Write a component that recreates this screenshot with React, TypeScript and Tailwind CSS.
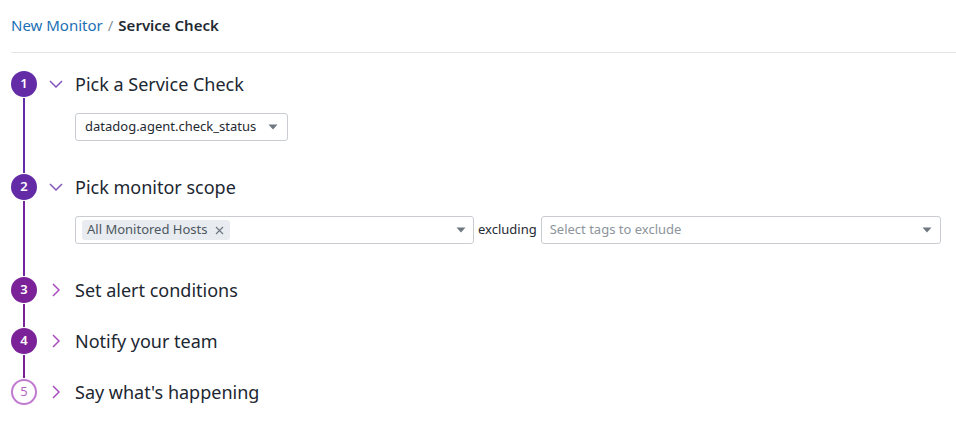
import React from "react";

const font = { fontFamily: '"Noto Sans", "Open Sans", sans-serif' };

function Caret() {
  return (
    <svg width="10" height="6" viewBox="0 0 10 6" className="shrink-0">
      <path d="M0.5 0.5 L9.5 0.5 L5 5.5 Z" fill="#6f7781" />
    </svg>
  );
}

function ChevronDown({ color }: { color: string }) {
  return (
    <svg width="14" height="8" viewBox="0 0 14 8">
      <path d="M1 1 L7 7 L13 1" fill="none" stroke={color} strokeWidth="1.5" />
    </svg>
  );
}

function ChevronRight({ color }: { color: string }) {
  return (
    <svg width="8" height="14" viewBox="0 0 8 14">
      <path d="M1 1 L7 7 L1 13" fill="none" stroke={color} strokeWidth="1.5" />
    </svg>
  );
}

type StepProps = {
  n: number;
  title: string;
  expanded?: boolean;
  circle: "a" | "b" | "c";
  lineColor?: string;
  children?: React.ReactNode;
};

function Step({ n, title, expanded, circle, lineColor, children }: StepProps) {
  const circleCls =
    circle === "a"
      ? "bg-[#632ca6] text-white font-semibold"
      : circle === "b"
      ? "bg-[#7b2299] text-white font-semibold"
      : "border-2 border-[#c27ad1] text-[#b466c4] bg-white font-normal";
  return (
    <div className="flex">
      <div className="flex w-[26px] shrink-0 flex-col items-center">
        <div
          className={`flex h-[26px] w-[26px] items-center justify-center rounded-full text-[13px] ${circleCls}`}
        >
          {n}
        </div>
        {lineColor ? (
          <div className="my-[1px] w-[2px] flex-1" style={{ backgroundColor: lineColor }} />
        ) : null}
      </div>
      <div className="flex-1">
        <div className="flex h-[26px] items-center">
          <div className="ml-[12px] flex w-[14px] justify-center">
            {expanded ? <ChevronDown color="#8557bd" /> : <ChevronRight color="#a84bbd" />}
          </div>
          <div className="ml-[12px] text-[18px] text-[#1c2731]">{title}</div>
        </div>
        {expanded ? (
          <div className="ml-[38px] pb-[33px] pt-[16px]">{children}</div>
        ) : lineColor ? (
          <div className="h-[25px]" />
        ) : null}
      </div>
    </div>
  );
}

export default function App() {
  return (
    <div className="h-[432px] w-[956px] bg-white" style={font}>
      <div className="pl-[11px]">
        <div className="flex h-[53px] items-center border-b border-[#e3e5e8] pb-[1px] text-[15px]">
          <span className="text-[#1a6fb5]">New Monitor</span>
          <span className="mx-[5px] text-[#8a9299]">/</span>
          <span className="font-semibold text-[#1f2a33]">Service Check</span>
        </div>
        <div className="pt-[18px]">
          <Step n={1} title="Pick a Service Check" expanded circle="a" lineColor="#632ca6">
            <div className="flex h-[28px] w-[213px] items-center justify-between rounded-[3px] border border-[#c9cdd2] pl-[9px] pr-[9px] text-[13px] text-[#1f2a33]">
              <span>datadog.agent.check_status</span>
              <Caret />
            </div>
          </Step>
          <Step n={2} title="Pick monitor scope" expanded circle="a" lineColor="#74249f">
            <div className="flex items-center">
              <div className="flex h-[28px] w-[399px] items-center justify-between rounded-[3px] border border-[#c9cdd2] pl-[6px] pr-[7px]">
                <div className="flex h-[20px] items-center rounded-[3px] bg-[#e8ebf0] pl-[5px] pr-[6px] text-[13px] text-[#4d5760]">
                  <span>All Monitored Hosts</span>
                  <svg width="9" height="9" viewBox="0 0 9 9" className="ml-[8px]">
                    <path d="M1 1 L8 8 M8 1 L1 8" stroke="#6f7781" strokeWidth="1.2" />
                  </svg>
                </div>
                <Caret />
              </div>
              <span className="mx-[4px] text-[13px] text-[#1f2a33]">excluding</span>
              <div className="flex h-[28px] w-[400px] items-center justify-between rounded-[3px] border border-[#c9cdd2] pl-[8px] pr-[8px] text-[13px] text-[#8d949b]">
                <span>Select tags to exclude</span>
                <Caret />
              </div>
            </div>
          </Step>
          <Step n={3} title="Set alert conditions" circle="b" lineColor="#7b2299" />
          <Step n={4} title="Notify your team" circle="b" lineColor="#7b2299" />
          <Step n={5} title="Say what's happening" circle="c" />
        </div>
      </div>
    </div>
  );
}
